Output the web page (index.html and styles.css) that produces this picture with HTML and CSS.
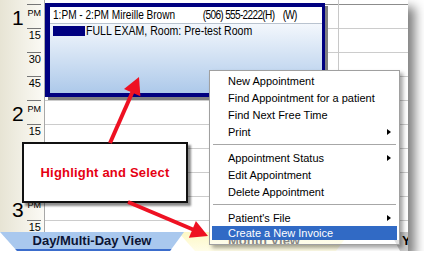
FILE: index.html
```html
<!DOCTYPE html>
<html>
<head>
<meta charset="utf-8">
<link rel="stylesheet" href="styles.css">
</head>
<body>
<div class="shot">
  <div class="frame">
    <div class="main">
      <div class="ruler">
        <div class="hour">
          <div class="hnum">1</div>
          <div class="marks">
            <div class="mark pm">PM</div>
            <div class="mark">15</div>
            <div class="mark">30</div>
            <div class="mark">45</div>
          </div>
        </div>
        <div class="hour">
          <div class="hnum">2</div>
          <div class="marks">
            <div class="mark pm">PM</div>
            <div class="mark">15</div>
            <div class="mark">30</div>
            <div class="mark">45</div>
          </div>
        </div>
        <div class="hour">
          <div class="hnum">3</div>
          <div class="marks">
            <div class="mark pm">PM</div>
            <div class="mark">15</div>
            <div class="mark">30</div>
            <div class="mark">45</div>
          </div>
        </div>
      </div>
      <div class="grid">
        <div class="col col-a">
          <div class="row top"></div><div class="row"></div><div class="row"></div><div class="row"></div><div class="row"></div>
          <div class="row"></div><div class="row"></div><div class="row"></div><div class="row"></div><div class="row"></div>
        </div>
        <div class="col col-b">
          <div class="row top"></div><div class="row"></div><div class="row"></div><div class="row"></div><div class="row"></div>
          <div class="row"></div><div class="row"></div><div class="row"></div><div class="row"></div><div class="row"></div>
        </div>
      </div>
    </div>
    <div class="tabs">
      <div class="tab tab-day">Day/Multi-Day View</div>
      <div class="tab tab-month">Month View</div>
      <div class="tab tab-year">Year View</div>
    </div>
  </div>

  <div class="appt">
    <div class="appt-head">
      <span class="cond head-text">1:PM - 2:PM Mireille Brown<span class="ph">(506) 555-2222(H)</span><span class="wk">(W)</span></span>
    </div>
    <div class="appt-body">
      <div class="appt-line"><span class="tag"></span><span class="cond">FULL EXAM, Room: Pre-test Room</span></div>
    </div>
  </div>

  <div class="callout">Highlight and Select</div>

  <div class="menu">
    <div class="mi">New Appointment</div>
    <div class="mi">Find Appointment for a patient</div>
    <div class="mi">Find Next Free Time</div>
    <div class="mi">Print<i class="caret"></i></div>
    <div class="sep"></div>
    <div class="mi">Appointment Status<i class="caret"></i></div>
    <div class="mi">Edit Appointment</div>
    <div class="mi">Delete Appointment</div>
    <div class="sep"></div>
    <div class="mi">Patient's File<i class="caret"></i></div>
    <div class="mi hl">Create a New Invoice</div>
  </div>

  <svg class="arrows" width="424" height="268" viewBox="0 0 424 268">
    <line x1="110" y1="143" x2="132.5" y2="92" stroke="#ee1122" stroke-width="4"/>
    <polygon points="139,77 140.4,96.2 124,89" fill="#ee1122"/>
    <line x1="128" y1="202" x2="193" y2="229.5" stroke="#ee1122" stroke-width="4"/>
    <polygon points="208,236 188.9,237.7 195.9,221.1" fill="#ee1122"/>
  </svg>
</div>
</body>
</html>
```

FILE: styles.css
```css
* { box-sizing: border-box; }
html, body { margin: 0; padding: 0; background: #fff; }
body { font-family: "Liberation Sans", Arial, sans-serif; color: #000; }

.shot {
  position: relative;
  width: 408px;
  height: 251px;
  background: #fff;
  box-shadow: 7px 7px 10px rgba(0, 0, 0, 0.5);
}
.frame {
  width: 100%;
  height: 100%;
  overflow: hidden;
  display: flex;
  flex-direction: column;
}
.main { display: flex; height: 232px; flex: none; }

/* time ruler */
.ruler {
  width: 45px;
  flex: none;
  border-right: 1px solid #a8a8a8;
  background: linear-gradient(to right, #e7e4d4, #fbfaf5);
  padding-top: 4px;
  overflow: hidden;
}
.hour { display: flex; height: 96px; }
.hnum { padding: 3px 0 0 12px; font-size: 21px; line-height: 21px; }
.marks { margin-left: auto; margin-right: 3px; width: 14px; }
.mark {
  height: 24px;
  border-top: 1px solid #767676;
  text-align: right;
  font-size: 11px;
  line-height: 13px;
}
.mark.pm { font-size: 9px; line-height: 11px; padding-top: 3px; }

/* grid */
.grid { flex: 1; display: flex; overflow: hidden; }
.col { padding-top: 4px; }
.col-a { width: 294px; flex: none; border-right: 1px solid #c8c8c8; }
.col-b { flex: 1; }
.row { height: 24px; border-top: 1px solid #cccccc; }
.row.top { border-top-color: #8c8c8c; }

/* tabs */
.tabs { display: flex; height: 19px; flex: none; background: #fff; }
.tab {
  height: 19px;
  flex: none;
  font-weight: bold;
  font-size: 13px;
  line-height: 16px;
  padding-top: 1px;
  text-align: center;
  white-space: nowrap;
}
.tab-day {
  position: relative;
  z-index: 2;
  width: 184px;
  background: #a9c8ee;
  border-bottom: 2px solid #3b6dcc;
  color: #0c1434;
  clip-path: polygon(0 0, 100% 0, calc(100% - 14px) 100%, 17px 100%);
}
.tab-month {
  width: 172px;
  margin-left: -6px;
  background: linear-gradient(#fdf8c4, #fffde8);
  color: #222;
  clip-path: polygon(0 0, 100% 0, calc(100% - 14px) 100%, 17px 100%);
}
.tab-year {
  width: 80px;
  margin-left: 40px;
  background: #c9c9c9;
  text-align: left;
  padding-left: 12px;
  clip-path: polygon(0 0, 100% 0, 100% 100%, 10px 100%);
}

/* appointment */
.appt {
  position: absolute;
  left: 45px;
  top: 3px;
  width: 280px;
  height: 94px;
  border-style: solid;
  border-color: #000080;
  border-width: 4px 3px 4px 5px;
  box-shadow: 3px 3px 0 #808080;
  display: flex;
  flex-direction: column;
  overflow: hidden;
}
.appt-head {
  height: 17px;
  flex: none;
  background: #fff;
  border-bottom: 1px solid #b9c3cf;
  padding-left: 3px;
  display: flex;
  align-items: center;
}
.appt-body {
  flex: 1;
  background: linear-gradient(#f3f7fc, #adc9ea);
  padding: 2px 0 0 3px;
}
.cond {
  display: inline-block;
  flex: none;
  transform: scaleX(0.88);
  transform-origin: 0 50%;
  white-space: pre;
  font-size: 12px;
  line-height: 12px;
}
.head-text { transform: scaleX(0.84); }
.ph { margin-left: 33px; letter-spacing: -0.8px; }
.wk { margin-left: 10px; letter-spacing: -1px; }
.appt-line { display: flex; align-items: center; height: 10px; }
.tag { width: 32px; height: 10px; flex: none; background: #000080; margin-right: 1px; }

/* callout */
.callout {
  position: absolute;
  left: 22px;
  top: 142px;
  width: 166px;
  height: 61px;
  border: 2px solid #111;
  background: #fff;
  box-shadow: 3px 3px 2px rgba(0, 0, 0, 0.45);
  display: flex;
  align-items: center;
  justify-content: center;
  color: #e60012;
  font-weight: bold;
  font-size: 13px;
  letter-spacing: 0.2px;
  z-index: 3;
}

/* context menu */
.menu {
  position: absolute;
  left: 209px;
  top: 70px;
  width: 191px;
  height: 175px;
  border: 1px solid #a0a0a0;
  padding: 1px 0 4px;
  background: linear-gradient(to bottom, #fff 0, #fff calc(100% - 4px), rgba(255, 255, 255, 0.45) calc(100% - 4px));
  box-shadow: 3px 3px 4px rgba(0, 0, 0, 0.35);
  font-size: 11px;
  z-index: 3;
}
.mi {
  height: 17px;
  margin: 0 2px;
  padding: 0 6px 0 16px;
  display: flex;
  align-items: center;
  justify-content: space-between;
  white-space: nowrap;
}
.mi.hl { height: 14px; background: #316ac5; color: #fff; }
.caret {
  width: 0;
  height: 0;
  border-left: 4px solid #000;
  border-top: 3.5px solid transparent;
  border-bottom: 3.5px solid transparent;
}
.sep { height: 9px; margin: 0 3px; display: flex; align-items: center; }
.sep::before { content: ""; flex: 1; height: 1px; background: #a7a7a7; }

.arrows { position: absolute; left: 0; top: 0; z-index: 4; pointer-events: none; overflow: visible; }
```
